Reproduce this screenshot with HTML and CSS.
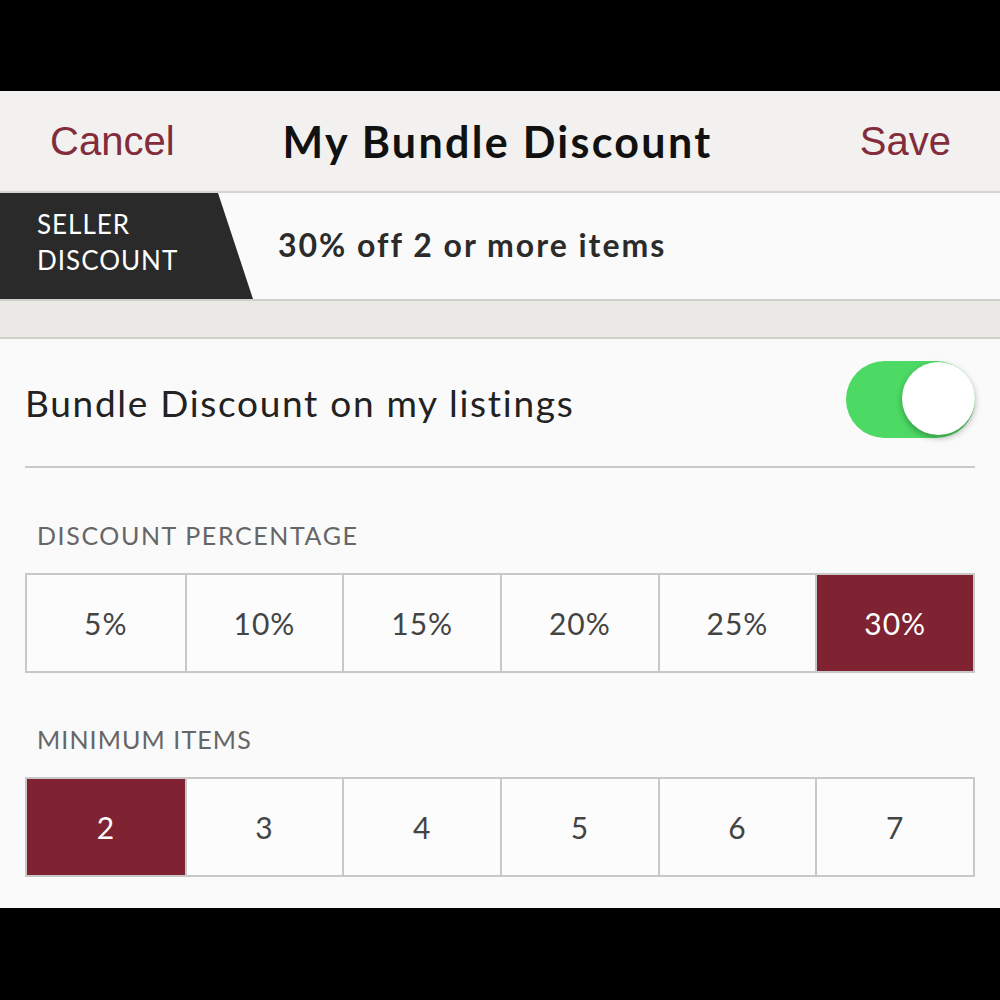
FILE: index.html
```html
<!DOCTYPE html>
<html lang="en">
<head>
  <meta charset="UTF-8">
  <meta name="viewport" content="width=device-width, initial-scale=1.0">
  <title>My Bundle Discount</title>
  <link rel="stylesheet" href="styles.css">
</head>
<body>
  <div class="screen">
    <header class="navbar">
      <a class="nav-btn" href="#">Cancel</a>
      <h1>My Bundle Discount</h1>
      <a class="nav-btn save" href="#">Save</a>
    </header>

    <div class="summary">
      <div class="tag">SELLER<br>DISCOUNT</div>
      <p class="summary-text">30% off 2 or more items</p>
    </div>

    <div class="spacer"></div>

    <section class="content">
      <div class="toggle-row">
        <span>Bundle Discount on my listings</span>
        <div class="switch on"><div class="knob"></div></div>
      </div>

      <h2 class="label">DISCOUNT PERCENTAGE</h2>
      <div class="segments">
        <button>5%</button>
        <button>10%</button>
        <button>15%</button>
        <button>20%</button>
        <button>25%</button>
        <button class="active">30%</button>
      </div>

      <h2 class="label">MINIMUM ITEMS</h2>
      <div class="segments">
        <button class="active">2</button>
        <button>3</button>
        <button>4</button>
        <button>5</button>
        <button>6</button>
        <button>7</button>
      </div>
    </section>
  </div>
</body>
</html>
```

FILE: styles.css
```css
html, body {
  margin: 0;
  padding: 0;
  background-color: #000;
}
body {
  font-family: Lato, "Open Sans", sans-serif;
  height: 1000px;
}
.screen {
  margin-top: 91px;
  width: 1000px;
  height: 817px;
  background-color: #fafafa;
}
.navbar {
  height: 102px;
  box-sizing: border-box;
  background-color: #f2f1ef;
  border-bottom: 2px solid #d6d4d2;
  display: grid;
  grid-template-columns: 1fr auto 1fr;
  align-items: center;
  padding: 0 49px 0 50px;
}
.navbar h1 {
  margin: 0 0 0 -6px;
  font-size: 43px;
  font-weight: 700;
  letter-spacing: 2.3px;
  color: #111;
}
.nav-btn {
  font-family: "Liberation Sans", Arial, sans-serif;
  font-size: 40px;
  color: #832c3b;
  text-decoration: none;
}
.nav-btn.save {
  justify-self: end;
}
.summary {
  height: 106px;
  display: flex;
  align-items: center;
  background-color: #fafafa;
}
.tag {
  align-self: stretch;
  width: 253px;
  box-sizing: border-box;
  background-color: #2a2a2a;
  color: #fff;
  font-size: 26px;
  letter-spacing: 1px;
  line-height: 36px;
  padding: 13px 0 0 37px;
  clip-path: polygon(0 0, 218px 0, 253px 100%, 0 100%);
}
.summary-text {
  margin: -3px 0 0 25px;
  font-size: 32px;
  font-weight: 700;
  letter-spacing: 2px;
  color: #2b2b2b;
}
.spacer {
  height: 36px;
  background-color: #ebe9e5;
  border-top: 2px solid #d2d0cc;
  border-bottom: 2px solid #d2d0cc;
}
.content {
  padding: 0 25px;
}
.toggle-row {
  height: 129px;
  box-sizing: border-box;
  border-bottom: 2px solid #c9c9c9;
  display: flex;
  align-items: center;
  justify-content: space-between;
  font-size: 37px;
  letter-spacing: 1.7px;
  color: #222;
}
.switch {
  width: 129px;
  height: 77px;
  border-radius: 39px;
  background-color: #4cd964;
  position: relative;
  margin-top: -6px;
}
.knob {
  position: absolute;
  top: 1px;
  right: 0;
  width: 73px;
  height: 73px;
  border-radius: 50%;
  background-color: #fff;
  box-shadow: 0 3px 6px rgba(0, 0, 0, 0.3);
}
.label {
  margin: 49px 0 20px 12px;
  font-size: 25px;
  font-weight: 400;
  letter-spacing: 1.6px;
  color: #666;
  line-height: 36px;
}
.label + .segments + .label {
  margin-top: 48px;
  letter-spacing: 1.1px;
}
.segments {
  display: grid;
  grid-template-columns: repeat(6, 1fr);
  border: 2px solid #c8c8c8;
  height: 100px;
  box-sizing: border-box;
}
.segments button {
  border: none;
  border-left: 2px solid #c8c8c8;
  background-color: #fcfcfc;
  font-family: Lato, "Open Sans", sans-serif;
  font-size: 30px;
  letter-spacing: 1px;
  color: #444;
  padding: 0;
}
.segments button:first-child {
  border-left: none;
}
.segments button.active {
  background-color: #7f2232;
  color: #fff;
}
```
